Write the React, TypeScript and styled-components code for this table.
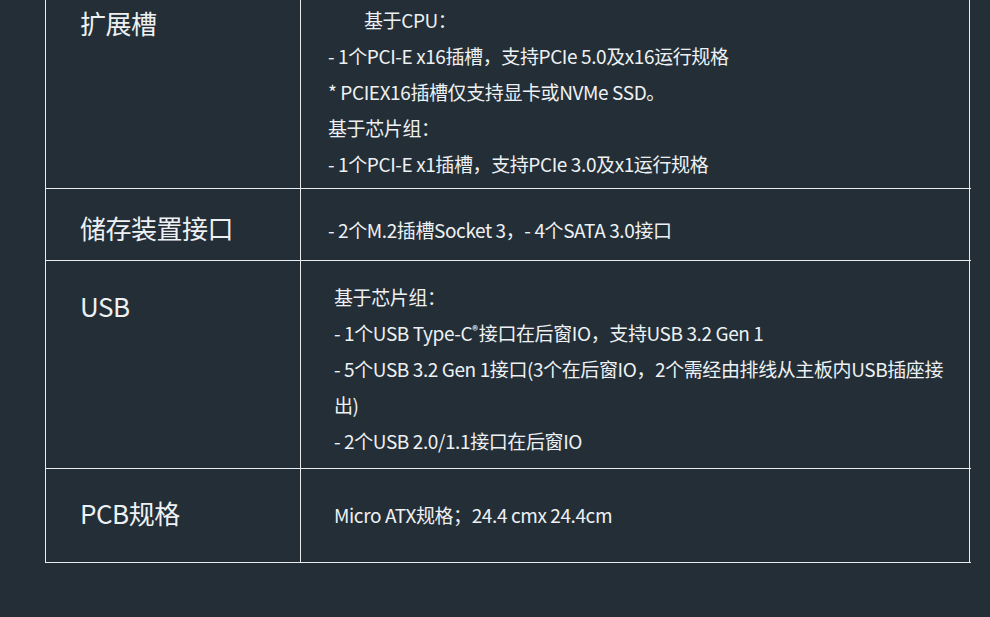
import React from "react";
import styled, { createGlobalStyle } from "styled-components";

const Global = createGlobalStyle`
  html, body { margin: 0; padding: 0; background: #232e37; }
  body { font-family: "Noto Sans CJK SC", "Noto Sans", sans-serif; color: #eef1f3; }
`;

const Page = styled.div`
  width: 990px;
  height: 617px;
  overflow: hidden;
  background: #232e37;
  padding-left: 45px;
  box-sizing: border-box;
`;

const Table = styled.div`
  width: 925px;
  margin-top: -1px;
  display: grid;
  grid-template-columns: 255px 670px;
  border-left: 1px solid #e9ecee;
  border-right: 1px solid #e9ecee;
  box-sizing: border-box;
`;

const Label = styled.div<{ $pt: number; $pb: number; $center?: boolean }>`
  border-top: 1px solid #e9ecee;
  border-right: 1px solid #e9ecee;
  padding: ${(p) => p.$pt}px 0 ${(p) => p.$pb}px 34px;
  font-size: 26px;
  line-height: 36px;
  display: flex;
  align-items: ${(p) => (p.$center ? "center" : "flex-start")};
  letter-spacing: -0.5px;
`;

const Value = styled.div<{ $pt: number; $pb: number; $pl: number; $center?: boolean }>`
  border-top: 1px solid #e9ecee;
  padding: ${(p) => p.$pt}px 0 ${(p) => p.$pb}px ${(p) => p.$pl}px;
  font-size: 19px;
  line-height: 36px;
  letter-spacing: -0.4px;
  display: flex;
  flex-direction: column;
  justify-content: ${(p) => (p.$center ? "center" : "flex-start")};
`;

const Line = styled.div<{ $indent?: number }>`
  white-space: nowrap;
  height: 36px;
  padding-left: ${(p) => p.$indent ?? 0}px;
`;

const Sup = styled.span`
  font-size: 11px;
  font-weight: 700;
  letter-spacing: 0;
  line-height: 0;
  vertical-align: 6px;
  margin: 0 1px 0 0;
`;

const Bottom = styled.div`
  grid-column: 1 / 3;
  border-top: 1px solid #e9ecee;
`;

export default function App() {
  return (
    <>
      <Global />
      <Page>
        <Table>
          <Label $pt={5} $pb={0}>扩展槽</Label>
          <Value $pt={2} $pb={6} $pl={27}>
            <Line $indent={36}>基于CPU：</Line>
            <Line>- 1个PCI-E x16插槽，支持PCIe 5.0及x16运行规格</Line>
            <Line>* PCIEX16插槽仅支持显卡或NVMe SSD。</Line>
            <Line>基于芯片组：</Line>
            <Line>- 1个PCI-E x1插槽，支持PCIe 3.0及x1运行规格</Line>
          </Value>

          <Label $pt={21} $pb={14}>储存装置接口</Label>
          <Value $pt={23} $pb={12} $pl={27}>
            <Line>- 2个M.2插槽Socket 3，- 4个SATA 3.0接口</Line>
          </Value>

          <Label $pt={27} $pb={0}>USB</Label>
          <Value $pt={18} $pb={9} $pl={33}>
            <Line>基于芯片组：</Line>
            <Line>- 1个USB Type-C<Sup>®</Sup>接口在后窗IO，支持USB 3.2 Gen 1</Line>
            <Line>- 5个USB 3.2 Gen 1接口(3个在后窗IO，2个需经由排线从主板内USB插座接</Line>
            <Line>出)</Line>
            <Line>- 2个USB 2.0/1.1接口在后窗IO</Line>
          </Value>

          <Label $pt={26} $pb={31} $center>PCB规格</Label>
          <Value $pt={28} $pb={29} $pl={33} $center>
            <Line>Micro ATX规格；24.4 cmx 24.4cm</Line>
          </Value>

          <Bottom />
        </Table>
      </Page>
    </>
  );
}
